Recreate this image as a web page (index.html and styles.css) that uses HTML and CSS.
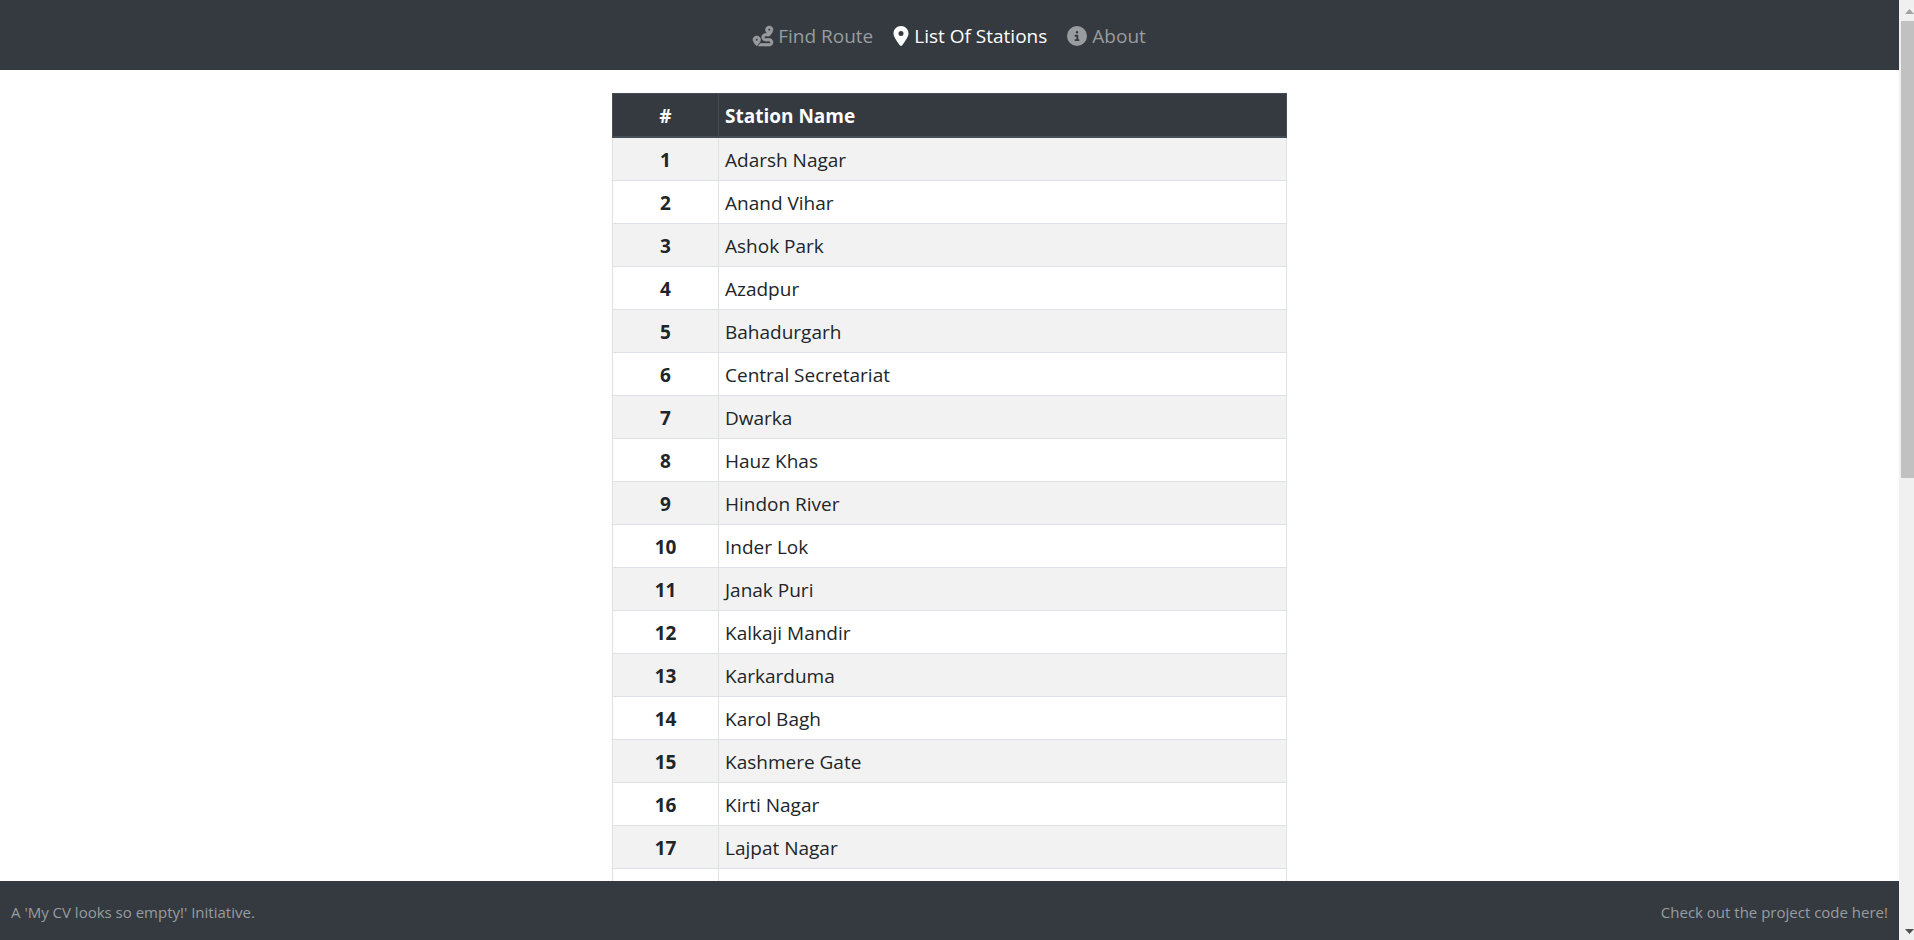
FILE: index.html
```html
<!DOCTYPE html>
<html lang="en">
<head>
<meta charset="utf-8">
<meta name="viewport" content="width=device-width, initial-scale=1">
<title>List Of Stations</title>
<link rel="stylesheet" href="styles.css">
</head>
<body>
<div class="page">
  <nav class="navbar">
    <a class="nav-link" href="#route">
      <svg class="icon icon-route" viewBox="0 0 512 512" aria-hidden="true"><path d="M512 96c0 50.200-59.100 125.100-84.600 155c-3.800 4.400-9.400 6.100-14.500 5H320c-17.700 0-32 14.300-32 32s14.300 32 32 32h96c53 0 96 43 96 96s-43 96-96 96H139.600c8.700-9.900 19.300-22.600 30-36.800c6.300-8.400 12.800-17.600 19-27.200H416c17.700 0 32-14.300 32-32s-14.300-32-32-32H320c-53 0-96-43-96-96s43-96 96-96h39.800c-21-31.500-39.800-67.700-39.800-96c0-53 43-96 96-96s96 43 96 96zM117.100 489.100c-3.800 4.300-7.200 8.100-10.100 11.300l-1.800 2-.2-.2c-6 4.600-14.600 4-20-1.800C59.800 473 0 402.500 0 352c0-53 43-96 96-96s96 43 96 96c0 30-21.100 67-43.500 97.900c-10.700 14.700-21.700 28-30.800 38.500l-.6 .7zM128 352a32 32 0 1 0 -64 0 32 32 0 1 0 64 0zM416 128a32 32 0 1 0 0-64 32 32 0 1 0 0 64z"/></svg>
      <span>Find Route</span>
    </a>
    <a class="nav-link active" href="#stations" aria-current="page">
      <svg class="icon icon-pin" viewBox="0 0 384 512" aria-hidden="true"><path d="M215.700 499.200C267 435 384 279.400 384 192C384 86 298 0 192 0S0 86 0 192c0 87.400 117 243 168.300 307.200c12.300 15.300 35.100 15.300 47.400 0zM192 128a64 64 0 1 1 0 128 64 64 0 1 1 0-128z"/></svg>
      <span>List Of Stations</span>
    </a>
    <a class="nav-link" href="#about">
      <svg class="icon" viewBox="0 0 512 512" aria-hidden="true"><path d="M256 512A256 256 0 1 0 256 0a256 256 0 1 0 0 512zM216 336h24V272H216c-13.300 0-24-10.700-24-24s10.700-24 24-24h48c13.300 0 24 10.700 24 24v88h8c13.300 0 24 10.700 24 24s-10.700 24-24 24H216c-13.300 0-24-10.700-24-24s10.700-24 24-24zm40-208a32 32 0 1 1 0 64 32 32 0 1 1 0-64z"/></svg>
      <span>About</span>
    </a>
  </nav>
  <main class="content">
    <table class="stations">
      <thead>
        <tr><th class="num" scope="col">#</th><th scope="col">Station Name</th></tr>
      </thead>
      <tbody>
        <tr><th class="num" scope="row">1</th><td>Adarsh Nagar</td></tr>
        <tr><th class="num" scope="row">2</th><td>Anand Vihar</td></tr>
        <tr><th class="num" scope="row">3</th><td>Ashok Park</td></tr>
        <tr><th class="num" scope="row">4</th><td>Azadpur</td></tr>
        <tr><th class="num" scope="row">5</th><td>Bahadurgarh</td></tr>
        <tr><th class="num" scope="row">6</th><td>Central Secretariat</td></tr>
        <tr><th class="num" scope="row">7</th><td>Dwarka</td></tr>
        <tr><th class="num" scope="row">8</th><td>Hauz Khas</td></tr>
        <tr><th class="num" scope="row">9</th><td>Hindon River</td></tr>
        <tr><th class="num" scope="row">10</th><td>Inder Lok</td></tr>
        <tr><th class="num" scope="row">11</th><td>Janak Puri</td></tr>
        <tr><th class="num" scope="row">12</th><td>Kalkaji Mandir</td></tr>
        <tr><th class="num" scope="row">13</th><td>Karkarduma</td></tr>
        <tr><th class="num" scope="row">14</th><td>Karol Bagh</td></tr>
        <tr><th class="num" scope="row">15</th><td>Kashmere Gate</td></tr>
        <tr><th class="num" scope="row">16</th><td>Kirti Nagar</td></tr>
        <tr><th class="num" scope="row">17</th><td>Lajpat Nagar</td></tr>
        <tr><th class="num" scope="row"></th><td></td></tr>
      </tbody>
    </table>
  </main>
  <footer class="footer">
    <span>A 'My CV looks so empty!' Initiative.</span>
    <a class="footer-link" href="#code">Check out the project code here!</a>
  </footer>
</div>
<div class="scrollbar" aria-hidden="true">
  <svg class="arrow" viewBox="0 0 13 21"><path fill="#a3a3a3" d="M4 14h9L8.500 9z"/></svg>
  <div class="thumb"></div>
  <svg class="arrow" viewBox="0 0 13 21"><path fill="#505050" d="M4 10h9L8.500 15z"/></svg>
</div>
</body>
</html>
```
FILE: styles.css
```css
* {
  box-sizing: border-box;
}

body {
  display: flex;
  height: 100vh;
  margin: 0;
  overflow: hidden;
  background: #fff;
  color: #212529;
  font-family: "Segoe UI", "Open Sans", "Noto Sans", sans-serif;
  font-size: 19px;
  line-height: 30px;
}

.page {
  display: flex;
  flex: 1;
  flex-direction: column;
  min-width: 0;
}

.navbar {
  display: flex;
  flex-shrink: 0;
  justify-content: center;
  gap: 20px;
  padding: 21px 20px 19px;
  background: #343a40;
}

.nav-link {
  display: flex;
  align-items: center;
  gap: 5px;
  color: #999c9f;
  text-decoration: none;
}

.nav-link.active {
  color: #fff;
}

.icon {
  width: 20px;
  height: 20px;
  fill: currentColor;
}

.icon-route {
  overflow: visible;
  stroke: currentColor;
  stroke-width: 16;
}

.icon-pin {
  width: 16px;
}

.content {
  flex: 1;
  min-height: 0;
  padding: 23px 20px 0;
  overflow: hidden;
}

.stations {
  width: 100%;
  max-width: 675px;
  margin: 0 auto;
  border-collapse: collapse;
}

.stations th,
.stations td {
  height: 43px;
  padding: 7px 6px 5px;
  border: 1px solid #dee2e6;
  text-align: left;
}

.stations thead th {
  border-color: #454d55;
  border-bottom-width: 2px;
  background: #343a40;
  color: #fff;
}

.stations .num {
  width: 106px;
  text-align: center;
}

.stations tbody tr:nth-child(odd) {
  background: #f2f2f2;
}

.footer {
  display: flex;
  flex-shrink: 0;
  align-items: center;
  justify-content: space-between;
  padding: 19px 11px 16px;
  background: #343a40;
  color: #999c9f;
  font-size: 15px;
  line-height: 24px;
}

.footer-link {
  color: inherit;
  text-decoration: none;
}

.scrollbar {
  display: flex;
  flex-direction: column;
  justify-content: flex-start;
  width: 15px;
  padding-left: 2px;
  background: #f0f0f0;
}

.arrow {
  display: block;
  flex-shrink: 0;
  width: 13px;
  height: 21px;
}

.arrow:last-child {
  margin-top: auto;
}

.thumb {
  height: 48.6%;
  background: #c1c1c1;
}
```
